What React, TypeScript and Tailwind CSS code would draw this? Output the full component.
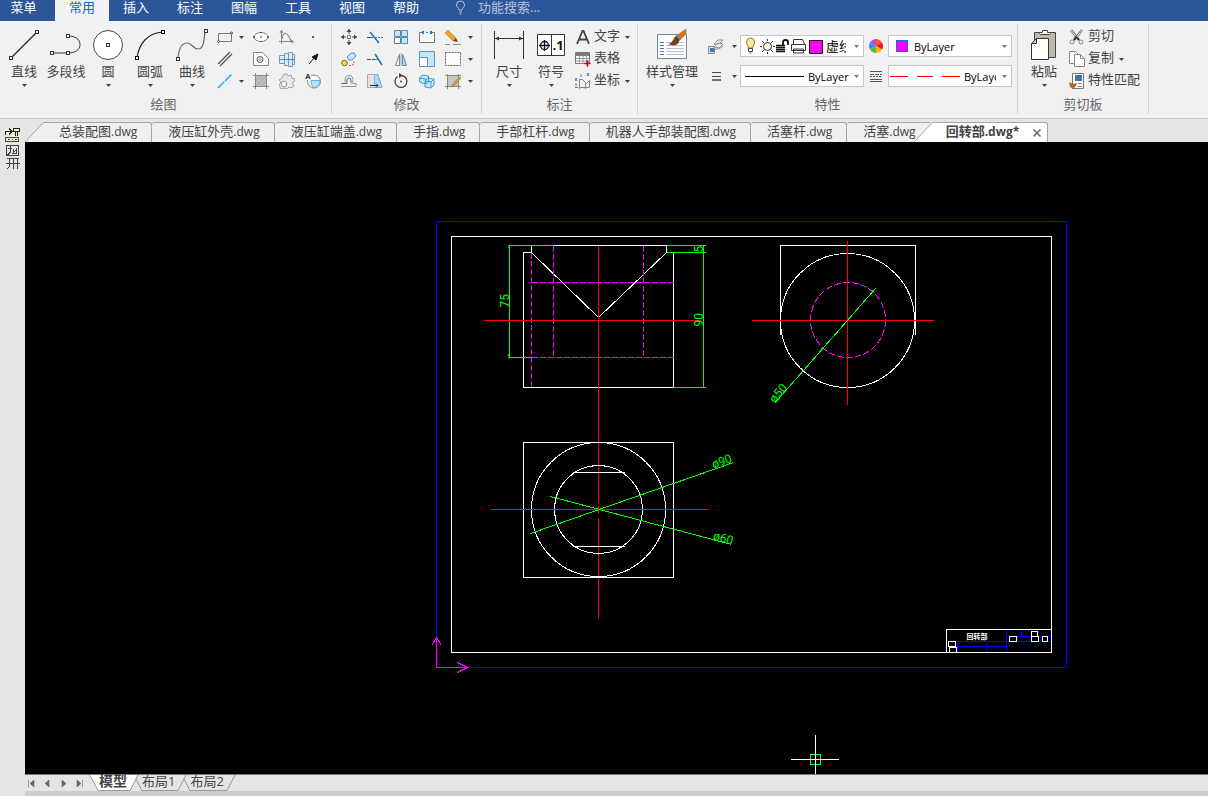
import React from 'react';

type IconProps = { children: React.ReactNode; size?: number };

const Icon = ({ children, size = 16 }: IconProps) => (
  <svg width={size} height={size} viewBox={`0 0 ${size} ${size}`} fill="none" stroke="#5a5f66" className="shrink-0">
    {children}
  </svg>
);

const Caret = ({ color = '#444' }: { color?: string }) => (
  <svg width="5" height="3" viewBox="0 0 5 3" className="shrink-0">
    <path d="M0 0h5L2.5 3z" fill={color} />
  </svg>
);

/* ---------- large ribbon icons ---------- */

const Node = ({ x, y, color = '#333' }: { x: number; y: number; color?: string }) => (
  <rect x={x - 1.5} y={y - 1.5} width="3" height="3" fill="#fff" stroke={color} />
);

const lineIcon = (
  <Icon size={32}>
    <path d="M3 29 29 3" stroke="#333" strokeWidth="1.5" />
    <Node x={3} y={29} />
    <Node x={29} y={3} />
  </Icon>
);

const polylineIcon = (
  <Icon size={32}>
    <path d="M2 24h16c7 0 12-3 12-8.5S25 7 18 7" stroke="#333" />
    <Node x={2} y={24} />
    <Node x={18} y={24} />
    <Node x={18} y={7} />
  </Icon>
);

const circleIcon = (
  <Icon size={32}>
    <circle cx="16" cy="16" r="14.5" fill="#fff" stroke="#444" />
    <Node x={16} y={16} />
  </Icon>
);

const arcIcon = (
  <Icon size={32}>
    <path d="M3 29C5 14 14 4 29 3" stroke="#222" strokeWidth="1.2" />
    <Node x={3} y={29} color="#000" />
    <Node x={29} y={3} color="#000" />
  </Icon>
);

const curveIcon = (
  <Icon size={32}>
    <path d="M2 29C3 18 7 14 11 14c5 0 6 6 11 6 6 0 6-9 7-18" stroke="#666" strokeWidth="1.2" />
    <Node x={2} y={30} />
    <Node x={30} y={2} />
  </Icon>
);

const dimIcon = (
  <Icon size={32}>
    <path d="M1.5 2v28M30.5 2v28" stroke="#333" />
    <path d="M2 9.5h28" stroke="#333" />
    <path d="m2 9.5 4-2v4zM30 9.5l-4-2v4z" fill="#333" stroke="none" />
  </Icon>
);

const symbolIcon = (
  <Icon size={32}>
    <path d="M2.500 5.500h27v21h-27z" fill="#fff" stroke="#333" />
    <path d="M16.5 6v20" stroke="#333" />
    <circle cx="9.5" cy="16.5" r="4" stroke="#111" strokeWidth="1.3" />
    <path d="M4 16.5h11M9.5 11v11" stroke="#111" strokeWidth="1.3" />
    <text x="17.5" y="21" fontSize="13" fontWeight="700" fontFamily="Open Sans, sans-serif" fill="#111" stroke="none">.1</text>
  </Icon>
);

const styleIcon = (
  <Icon size={32}>
    <path d="M1.5 5.500h29v24h-29z" fill="#fff" stroke="#6d8aa5" />
    <path d="M4 13.500h4M4 16.500h4M4 19.500h4M4 22.500h4M4 25.500h4" stroke="#5577a0" />
    <path d="M10 13.500h18M10 16.500h18M10 19.500h18M10 22.500h18M10 25.500h18" stroke="#b9bdd6" />
    <path d="M12 15c4 0 4-4 7-6l4 4c-2 4-6 4-11 2z" fill="#7a3e12" stroke="none" />
    <path d="m18 9 3-3 4 4-3 3z" fill="#444" stroke="none" />
    <path d="m20 7 10-7v5l-6 6z" fill="#c9752b" stroke="#a85d1c" strokeWidth=".5" />
  </Icon>
);

const pasteIcon = (
  <Icon size={32}>
    <path d="M6.500 3.500h21v25h-21z" fill="#c2b8aa" stroke="#444" />
    <path d="M11.500 4.500v-1h3v-2h5v2h3v1l-1 1h-9z" fill="#fff" stroke="#444" />
    <path d="M8.500 9.500h12v21h-17v-16z" fill="#fff" stroke="#333" />
    <path d="M8.500 9.500v5h-5z" fill="#ccc" stroke="#333" />
  </Icon>
);

/* ---------- small ribbon icons ---------- */

const drawIcons = [
  <Icon>
    <path d="M1.5 4.500h13v8h-13z" stroke="#777" />
    <circle cx="1.5" cy="12.5" r="1" fill="#fff" stroke="#444" />
    <circle cx="14.5" cy="4" r="1" fill="#fff" stroke="#444" />
  </Icon>,
  <Icon>
    <ellipse cx="8" cy="8" rx="7" ry="4.5" fill="#fcfcfc" stroke="#888" />
    <path d="M7 8h2M7 3.500h2M7 12.500h2M1 7v2M15 7v2" stroke="#444" strokeWidth="1.2" />
  </Icon>,
  <Icon>
    <path d="M2.500 1v14M0 12.500h14M1 4l1.500-3L4 4M12 11l2.500 1.500L12 14" stroke="#888" />
    <path d="M3 10c1-8 5-8 9 2" stroke="#666" />
  </Icon>,
  <Icon>
    <path d="M7 7h2v2H7z" fill="#555" stroke="none" />
  </Icon>,
  <Icon>
    <path d="M1 13 13 1M3 15 15 3" stroke="#555" strokeWidth="1.3" />
  </Icon>,
  <Icon>
    <path d="M.500 1.500h9l6 6v7H.500z" stroke="#888" fill="#fafafa" />
    <circle cx="7" cy="8.500" r="3" stroke="#555" />
    <circle cx="7" cy="8.500" r="1" stroke="#999" />
  </Icon>,
  <Icon>
    <path d="M.500 4.500h5v8h-5zM5.500 2.500h4v12h-4zM9.500 1.500h4v14h-4zM13.500 3.500h2v10h-2z" fill="#dce8f3" stroke="#8096ab" />
    <path d="M0 8.500h16" stroke="#2f9bd8" />
  </Icon>,
  <Icon>
    <path d="m4 13 5-6" stroke="#111" />
    <path d="m13 3-2 6-4-3z" fill="#111" stroke="#111" />
  </Icon>,
  <Icon>
    <path d="M1 15 15 1" stroke="#19a0e0" strokeWidth="1.3" strokeDasharray="9 1" />
  </Icon>,
  <Icon>
    <path d="M2.500 2.500h11v11h-11z" fill="#b9bec2" stroke="#777" />
    <path d="M0 2.500h16M0 13.500h16M2.500 0v16M13.500 0v16" stroke="#888" />
    <path d="m3 8 5-5M3 13 13 3M8 13l5-5" stroke="#a5a9ad" />
  </Icon>,
  <Icon>
    <path d="M5 1h3l1 2 3-1 1 3 3 1-1 3-2 1 2 3-3 2-2-1-2 2-3-1-3 1-2-4 2-3-2-2 3-2z" fill="#e3e9ef" stroke="#98a4ae" />
    <circle cx="5" cy="11" r="2.8" fill="#f6f6f6" stroke="#8d9aa5" />
  </Icon>,
  <Icon>
    <circle cx="9" cy="8.500" r="6.500" fill="#f7f7f7" stroke="#888" />
    <path d="M6 7.500h9c0 4-2 7-6 7-2-1-3-4-3-7z" fill="#b9e2f8" stroke="#38a5de" strokeWidth=".8" />
    <path d="M0 0h6v7H0z" fill="#f1f1f1" stroke="none" />
    <text x="0" y="6" fontSize="8" fontWeight="700" fontFamily="Liberation Sans, sans-serif" fill="#333" stroke="none">A</text>
  </Icon>,
];

const editIcons = [
  <Icon>
    <path d="M8 0v5M8 11v5M0 8h5M11 8h5" stroke="#444" />
    <path d="m8 0-2.500 3h5zM8 16l-2.500-3h5zM0 8l3-2.500v5zM16 8l-3-2.500v5z" fill="#444" stroke="none" />
    <path d="M6.500 6.500h3v3h-3z" fill="#fff" stroke="#777" />
  </Icon>,
  <Icon>
    <path d="M0 8.500h6" stroke="#555" />
    <path d="M8 8.500h8" stroke="#3f8fd0" strokeDasharray="2 1" />
    <path d="m3 3 9 11" stroke="#1d6fb8" strokeWidth="1.4" />
  </Icon>,
  <Icon>
    <path d="M1.500 1.500h6v6h-6zM8.500 1.500h6v6h-6zM8.500 8.500h6v6h-6z" fill="#c3e7fa" stroke="#4f8fba" />
    <path d="M1.500 8.500h6v6h-6z" fill="#fff" stroke="#777" />
  </Icon>,
  <Icon>
    <path d="M3 3.500H.500v10h15v-10H13M7 3.500h2" fill="#fafafa" stroke="#777" />
    <path d="M3 2h2v3H3zM11 2h2v3h-2z" fill="#2480c7" stroke="none" />
  </Icon>,
  <Icon>
    <path d="m0 4 3-3 8 8-3 3z" fill="#f2a02c" stroke="#c77a13" strokeWidth=".6" />
    <path d="m8 12 3-3 2 4z" fill="#7a3f1c" stroke="none" />
    <path d="M0 15.500h5M8 15.500h8" stroke="#888" />
  </Icon>,
  <Icon>
    <circle cx="3.5" cy="12" r="2.800" fill="#ffe100" stroke="#666" />
    <path d="m6 6 4-4 3 0 2 3-4 4H8z" fill="#c3e7fa" stroke="#4f8fba" />
    <path d="M8 14.500c4 0 5-1 5-4" stroke="#d36" strokeDasharray="2 1" />
  </Icon>,
  <Icon>
    <path d="M0 8.500h8" stroke="#555" strokeDasharray="4 1" />
    <path d="M8 8.500h4" stroke="#3f8fd0" />
    <path d="m8 3 7 11" stroke="#1d6fb8" strokeWidth="1.4" />
  </Icon>,
  <Icon>
    <path d="M6.500 3v11.500H2.500z" fill="#eee" stroke="#888" />
    <path d="M9.500 3v11.500h4z" fill="#a9dcf8" stroke="#6d8aa5" />
    <path d="M8 2v13" stroke="#aaa" />
  </Icon>,
  <Icon>
    <path d="M.500.500h15v15H.500z" fill="#c3e7fa" stroke="#6096be" />
    <path d="M.500 6.500h8v9h-8z" fill="#fff" stroke="#6096be" />
  </Icon>,
  <Icon>
    <path d="M.500 1.500h15v13H.500z" fill="#fcfcfc" stroke="#666" strokeDasharray="2 1" />
  </Icon>,
  <Icon>
    <path d="M0 13.500h15v-3h-3c-1 0 0-2 0-4s-1-4-4-4-4 2-4 4 1 4 0 4H0" stroke="#6d9ac0" />
    <path d="M1 10.500h5V7a2 2 0 0 1 4 0v3.500" stroke="#666" />
  </Icon>,
  <Icon>
    <path d="M.500 1.500h7v13h-7z" fill="#e2e2e2" stroke="#aaa" />
    <path d="M8 1.500h3l4 13H8" fill="#a9dcf8" stroke="#74afd0" />
    <path d="M3 12.500h8m-2-2 2 2-2 2" stroke="#333" />
  </Icon>,
  <Icon>
    <path d="M9 2.500a6 6 0 1 1-4.500 1" stroke="#444" strokeWidth="1.3" />
    <path d="m6 0 4 2.500L6 5z" fill="#444" stroke="none" />
    <circle cx="8" cy="8.500" r="1" fill="#444" stroke="none" />
  </Icon>,
  <Icon>
    <path d="m.500 5 3-3 6 1v6l-3 2-6-2zM6 8l3-3 6 1v6l-3 3-6-1z" fill="#c3e7fa" stroke="#4a9aca" />
    <path d="m.500 5 6 1v5M6 8l6 1v5M12 9l3-3" stroke="#4a9aca" />
  </Icon>,
  <Icon>
    <path d="M2.500 2.500h11v11h-11z" fill="#c3c7ca" stroke="#777" />
    <path d="M0 2.500h16M0 13.500h16M2.500 1v15M13.500 1v15" stroke="#888" />
    <path d="m8 11 6-7 2 1-6 7-3 1z" fill="#e79a35" stroke="#9b5b18" strokeWidth=".5" />
  </Icon>,
];

const letterIcon = (
  <Icon>
    <path d="M2 15 7.500 2h1L14 15M4.500 10.500h7" stroke="#444" strokeWidth="1.8" />
  </Icon>
);

const tableIcon = (
  <Icon>
    <path d="M.500 1.500h14v11H.500z" fill="#fff" stroke="#777" />
    <path d="M1 2h13v3H1z" fill="#777" stroke="none" />
    <path d="M1 7.500h13M1 10h13M4.500 4v9M8 4v9M11.500 4v9" stroke="#999" />
    <path d="M12.500 9.500v6M9.500 12.500h6" stroke="#c00" strokeWidth="1.6" />
  </Icon>
);

const coordIcon = (
  <Icon>
    <path d="M4.500 6v10M4.500 6.500h3l4 4 3-3v7h-10M10.500 10v6" stroke="#888" />
    <path d="m0 5 2 3M2 5 0 8M12 0l2 3M14 0l-2 3M1 10v3M6 1v3M0 14.500h3" stroke="#4180c0" />
  </Icon>
);

const scissorsIcon = (
  <Icon>
    <path d="m2 1 8 10M13 1 5 11" stroke="#666" strokeWidth="2.4" />
    <path d="m2 1 7 9M13 1 6 10" stroke="#eee" />
    <path d="m5 11 2-3 3 3" stroke="#333" strokeWidth="1.5" />
    <circle cx="3" cy="13" r="2" stroke="#888" />
    <circle cx="12" cy="13" r="2" stroke="#888" />
  </Icon>
);

const copyIcon = (
  <Icon>
    <path d="M.500.500h6l3 3v9h-9z" fill="#fff" stroke="#888" />
    <path d="M5.500 3.500h6l4 4v8h-10z" fill="#fff" stroke="#888" />
    <path d="M11.500 3.500v4h4" stroke="#888" />
  </Icon>
);

const matchIcon = (
  <Icon>
    <path d="M3.500.500h11v15h-11z" fill="#fff" stroke="#777" />
    <path d="M6 2h7v6H6z" fill="#3d78b5" stroke="none" />
    <path d="M9 10.500h4M9 13.500h4" stroke="#888" />
    <path d="m0 9 4 2 4-1-1 3-3 3-3-2z" fill="#b5651d" stroke="none" />
  </Icon>
);

/* ---------- ribbon building blocks ---------- */

type BigButtonProps = { icon: React.ReactNode; label: string; caret?: boolean; wide?: boolean };

const BigButton = ({ icon, label, caret = true, wide }: BigButtonProps) => (
  <button className={`flex h-[68px] flex-col items-center pt-[3px] ${wide ? 'w-[60px]' : 'w-[42px]'}`}>
    {icon}
    <span className="mt-px whitespace-nowrap leading-[18px]">{label}</span>
    {caret && <span className="mt-1"><Caret /></span>}
  </button>
);

const RowButton = ({ icon, label, caret }: { icon: React.ReactNode; label: string; caret?: boolean }) => (
  <button className="flex h-[22px] items-center gap-[3px] whitespace-nowrap">
    {icon}
    <span className="pb-[3px]">{label}</span>
    {caret && <span className="ml-0.5"><Caret /></span>}
  </button>
);

type GroupProps = { title: string; className: string; indent: string; children: React.ReactNode };

const Group = ({ title, className, indent, children }: GroupProps) => (
  <section aria-label={title} className={`flex shrink-0 flex-col border-r border-[#d4d4d4] ${className}`}>
    <div className={`flex h-[72px] pt-0.5 ${indent}`}>{children}</div>
    <div className="text-center leading-5 text-[#666]">{title}</div>
  </section>
);

const comboClass = 'flex h-[22px] w-[124px] items-center border border-[#c6c6c6] bg-white pr-1 pl-1 text-black';
const selectClass = 'h-full min-w-0 flex-1 appearance-none overflow-hidden bg-transparent outline-none';

const menus = ['插入', '标注', '图幅', '工具', '视图', '帮助'];

const MenuBar = () => (
  <nav className="flex h-[21px] bg-[#2b579a] text-white">
    <button className="w-[55px] pr-2 pb-1.5">菜单</button>
    <button className="w-[54px] bg-[#f1f1f1] pb-1.5 text-[#1a66c2]">常用</button>
    {menus.map((m) => (
      <button key={m} className="w-[54px] pb-1.5">{m}</button>
    ))}
    <label className="ml-5 flex items-center gap-2.5 pb-1.5">
      <svg width="15" height="15" viewBox="0 0 15 15" fill="none" stroke="#b4c3dd">
        <path d="M6 10c0-2-2.500-2.500-2.500-5a4 4 0 0 1 8 0c0 2.500-2.500 3-2.500 5zM6 12h3M6.500 14h2" />
      </svg>
      <input
        aria-label="功能搜索"
        placeholder="功能搜索..."
        className="w-32 bg-transparent outline-none placeholder:text-[#b4c3dd]"
      />
    </label>
  </nav>
);

const Ribbon = () => (
  <div className="flex h-[98px] overflow-hidden border-b border-[#c9c9c9] bg-[#f1f1f1] pt-[3px] pb-1">
    <Group title="绘图" className="w-[332px] pr-1" indent="pl-[3px]">
      <div className="flex">
        <BigButton icon={lineIcon} label="直线" />
        <BigButton icon={polylineIcon} label="多段线" caret={false} />
        <BigButton icon={circleIcon} label="圆" />
        <BigButton icon={arcIcon} label="圆弧" />
        <BigButton icon={curveIcon} label="曲线" />
      </div>
      <div className="grid grid-cols-[35px_26px_26px_26px] grid-rows-[22px_22px_22px]">
        {drawIcons.map((icon, i) => (
          <button key={i} aria-label="绘图工具" className={`flex items-center gap-1.5 ${i % 4 === 0 ? 'pl-1' : 'justify-center'}`}>
            {icon}
            {(i === 0 || i === 8) && <Caret />}
          </button>
        ))}
      </div>
    </Group>

    <Group title="修改" className="w-[150px]" indent="pl-1">
      <div className="grid grid-cols-[26px_26px_26px_26px_36px] grid-rows-[22px_22px_22px]">
        {editIcons.map((icon, i) => (
          <button key={i} aria-label="修改工具" className={`flex items-center ${i % 5 === 4 ? 'gap-[7px] pl-[5px]' : 'justify-center'}`}>
            {icon}
            {i % 5 === 4 && <Caret />}
          </button>
        ))}
      </div>
    </Group>

    <Group title="标注" className="w-[156px]" indent="pl-1.5">
      <BigButton icon={dimIcon} label="尺寸" />
      <BigButton icon={symbolIcon} label="符号" />
      <div className="ml-[3px]">
        <RowButton icon={letterIcon} label="文字" caret />
        <RowButton icon={tableIcon} label="表格" />
        <RowButton icon={coordIcon} label="坐标" caret />
      </div>
    </Group>

    <Group title="特性" className="w-[380px]" indent="pl-1">
      <BigButton icon={styleIcon} label="样式管理" wide />
      <div className="ml-1.5 flex flex-col gap-2 pt-[9px] text-[11px]">
        <div className="flex h-[22px] items-center">
          <button aria-label="图层" className="flex w-8 items-center gap-2">
            <Icon>
              <path d="m6 6 4-4h5l-4 4zM6 9l4-4 5 1-4 4zM7 11h4l4-3" fill="#f4f4f4" stroke="#8a939c" />
              <path d="M.500 8.500h6v7h-6z" fill="#ddd" stroke="#888" />
              <path d="M2 10h4v4H2z" fill="#3a78b8" stroke="none" />
            </Icon>
            <Caret />
          </button>
          <div className={comboClass}>
            <svg width="80" height="18" viewBox="0 0 80 18" fill="none" stroke="#333" className="shrink-0">
              <path d="M3.500 11C3 8 1.500 8 1.500 5a4 4 0 0 1 8 0c0 3-1.500 3-2 6z" fill="#ffe7a0" stroke="#9a7a30" />
              <path d="M3.500 11.500h4v3h-4zM4.500 16h2" stroke="#444" />
              <circle cx="22.5" cy="9.500" r="4" fill="#fff6da" />
              <path d="M22.500 2v2M22.500 15v2M15 9.500h2M28 9.500h2M17 4l2 2M28 4l-2 2M17 15l2-2M28 15l-2-2" />
              <path d="M31 8.500h9M31 10.500h9M31 12.500h9M31 14.500h9" stroke="#111" strokeWidth="1.4" />
              <path d="M38 8V5q0-2 2.500-2T43 5v3" stroke="#111" strokeWidth="1.8" />
              <path d="M48.500 7V2.500h9L59.500 7M46.500 7.500h14v6h-14zM48.500 12v4h10v-4z" fill="#fff" />
              <path d="M64.500 3.500h13v13h-13z" fill="#f0f" stroke="#111" />
            </svg>
            <select aria-label="当前图层" className={`ml-px text-[13px] ${selectClass}`}>
              <option>虚线层</option>
            </select>
            <span className="ml-2 shrink-0"><Caret color="#777" /></span>
          </div>
          <div className="flex w-6 justify-center">
            <svg width="14" height="14" viewBox="0 0 14 14">
              <path d="M7 7V0a7 7 0 0 1 6 3.500z" fill="#ff5a22" />
              <path d="M7 7V0a7 7 0 0 0-6 3.500z" fill="#b44bd8" />
              <path d="M7 7l6-3.500a7 7 0 0 1 0 7z" fill="#e31b23" />
              <path d="M7 7 1 3.500a7 7 0 0 0 0 7z" fill="#3c8ee8" />
              <path d="m7 7 6 3.500A7 7 0 0 1 7 14z" fill="#ffb300" />
              <path d="m7 7-6 3.500A7 7 0 0 0 7 14z" fill="#56b947" />
            </svg>
          </div>
          <div className={comboClass}>
            <span className="ml-[3px] size-3 shrink-0 border border-[#0078d7] bg-[#f0f]" />
            <select aria-label="颜色" className={`ml-1.5 ${selectClass}`}>
              <option>ByLayer</option>
            </select>
            <Caret color="#777" />
          </div>
        </div>
        <div className="flex h-[22px] items-center">
          <button aria-label="线宽设置" className="flex w-8 items-center gap-2">
            <Icon>
              <path d="M4 4.500h9M4 8.500h9" stroke="#444" />
              <path d="M4 12h9" stroke="#444" strokeWidth="1.500" />
            </Icon>
            <Caret />
          </button>
          <div className={comboClass}>
            <span className="h-px w-[59px] shrink-0 bg-black" />
            <select aria-label="线宽" className={`ml-1 ${selectClass}`}>
              <option>ByLayer</option>
            </select>
            <Caret color="#777" />
          </div>
          <div className="flex w-6 justify-center">
            <svg width="12" height="11" viewBox="0 0 12 11" stroke="#555" fill="none">
              <path d="M0 .500h12M0 8.500h12M0 10.500h12" />
              <path d="M0 3.500h12" strokeDasharray="4 1" />
              <path d="M0 5.500h12" strokeDasharray="2 1" />
            </svg>
          </div>
          <div className="flex h-[22px] w-[124px] items-center border border-[#c6c6c6] bg-white pr-1 pl-px text-black">
            <svg width="70" height="1" viewBox="0 0 70 1" className="shrink-0" shapeRendering="crispEdges">
              <path d="M0 .500h18M27 .500h16M52 .500h18" stroke="red" />
            </svg>
            <select aria-label="线型" className={`ml-1 ${selectClass}`}>
              <option>ByLayer</option>
            </select>
            <span className="ml-1.5 shrink-0"><Caret color="#777" /></span>
          </div>
        </div>
      </div>
    </Group>

    <Group title="剪切板" className="w-[131px]" indent="pl-[5px]">
      <BigButton icon={pasteIcon} label="粘贴" />
      <div className="ml-1">
        <RowButton icon={scissorsIcon} label="剪切" />
        <RowButton icon={copyIcon} label="复制" caret />
        <RowButton icon={matchIcon} label="特性匹配" />
      </div>
    </Group>
  </div>
);

/* ---------- document tabs ---------- */

const docs = ['总装配图', '液压缸外壳', '液压缸端盖', '手指', '手部杠杆', '机器人手部装配图', '活塞杆', '活塞'];

const Slope = ({ fill, overlap }: { fill: string; overlap?: boolean }) => (
  <svg width="20" height="20" viewBox="0 0 20 20" className={`shrink-0 ${overlap ? 'relative -ml-4' : ''}`}>
    <path d="M0 20 18.500.500H20V20z" fill={fill} />
    <path d="M0 20 18.500.500H20" fill="none" stroke="#a5a5a5" />
  </svg>
);

const DocTabs = () => (
  <div className="flex h-[23px] overflow-hidden bg-[#e5e5e5] pt-[3px] whitespace-nowrap text-[#444]">
    <Slope fill="#f0f0f0" />
    {docs.map((name, i) => (
      <button
        key={name}
        className={`h-5 shrink-0 border-t border-[#a5a5a5] bg-[#f0f0f0] pr-3.5 pb-0.5 leading-4 ${i === 0 ? 'pl-3.5' : 'rounded-tl-[3px] pl-4'} ${i < 7 ? 'rounded-tr-[3px] border-r' : ''}`}
      >
        {name}<span className="text-xs">.dwg</span>
      </button>
    ))}
    <Slope fill="#fff" overlap />
    <div className="flex h-5 shrink-0 items-center rounded-tr-[3px] border-t border-r border-[#a5a5a5] bg-white pr-1.5 pl-3">
      <button className="pb-0.5 leading-4 font-bold">
        回转部<span className="text-xs">.dwg*</span>
      </button>
      <button aria-label="关闭" className="ml-3.5">
        <svg width="8" height="8" viewBox="0 0 8 8" stroke="#666" strokeWidth="1.5">
          <path d="m.500.500 7 7M7.500.500l-7 7" />
        </svg>
      </button>
    </div>
  </div>
);

/* ---------- drawing area ---------- */

const Drawing = () => (
  <svg aria-label="图纸" className="block min-h-[600px] w-full flex-1 bg-black" shapeRendering="crispEdges" fill="none">
    <g transform="translate(-24.5 -141.5)">
      {/* sheet frame */}
      <path d="M436 221h630v446H436z" stroke="#00f" />
      <path d="M451 236h600v416H451z" stroke="#fff" />

      {/* front view */}
      <g stroke="#fff">
        <path d="M531 245h135v7M531 245v7h-8v135h150V252M531 252l67 65 68-65" />
      </g>
      <g stroke="#f0f" strokeDasharray="6 2">
        <path d="M531 252v135M553 245v112M643 245v112M531 282h142M531 357h142" />
      </g>
      <g stroke="#0f0">
        <path d="M507 245h46M507 357h24M509 245v112M508 248l1-3M508 354l1 3" />
        <path d="M666 245h39M666 252h39M703 245v142M673 387h32" />
      </g>
      <path d="M483 320h217M598 245v257M598 505v8M598 517v101" stroke="red" />

      {/* side view */}
      <path d="M780 334v-89h135v89" stroke="#fff" />
      <circle cx="847" cy="320" r="67" stroke="#fff" />
      <circle cx="847.5" cy="319.5" r="37.5" stroke="#f0f" strokeDasharray="7 2" />
      <path d="M751 320h182M847 240v164" stroke="red" />
      <path d="m774 403 101-115M871 290l3 1M820 348h3" stroke="#0f0" />

      {/* top view */}
      <path d="M523 442h150v135H523z" stroke="#fff" />
      <circle cx="598" cy="509" r="67" stroke="#fff" />
      <circle cx="598" cy="509" r="44" stroke="#fff" />
      <path d="M572 472h52M572 546h52" stroke="#fff" />
      <path d="M490 509h217" stroke="red" />
      <path d="m530 533 203-71M550 496l181 48" stroke="#0f0" />

      {/* dimension values */}
      <g fill="#0f0" fontFamily="'Liberation Sans Narrow', Roboto, sans-serif" fontSize="12">
        <text transform="translate(508 307) rotate(-90)">75</text>
        <text transform="translate(702 326) rotate(-90)">90</text>
        <text transform="translate(702 252) rotate(-90)">5</text>
        <text transform="translate(774 403) rotate(-49)">ø50</text>
        <text transform="translate(713 468) rotate(-19)">ø90</text>
        <text transform="translate(712 539) rotate(15)">ø60</text>
      </g>

      {/* title block */}
      <path d="M946 641h60M946 646h60M957 641v11M987 641v11M1006 629v23M1006 636h46M1021 629v7M1017 636v5h12v-5M1040 636v5M1006 641h46" stroke="#00f" />
      <path d="M946 629h105v23H946z" stroke="#fff" />
      <path d="M1009 636h7v5h-7zM1031 631h6v5h-6zM1031 636h7v5h-7zM1042 636h5v5h-5zM948 641h7v5h-7zM949 647h7v5h-7z" fill="#000" stroke="#fff" />
      <text x="966" y="638" fontSize="7" fontWeight="700" fill="#fff">回转部</text>

      {/* UCS origin */}
      <path d="M436 637v30h30M431 645l5-8 5 8M457 662l10 5-10 5" stroke="#f0f" />

      {/* crosshair */}
      <path d="M810 754h10v10h-10z" stroke="#00ff80" />
      <path d="M815 734v41M790 759h48" stroke="#fff" />
    </g>
  </svg>
);

/* ---------- layout tabs ---------- */

const LayoutTabs = () => (
  <div className="border-t border-[#777] bg-[#e5e5e5] text-[#444]">
    <div className="flex h-4">
      <div className="flex items-center">
        {['M1.5 1v7M7 1v7L3 4.500z', 'M6 1v7L2 4.500z', 'M3 1v7l4-3.500z', 'M7.500 1v7M2 1v7l4-3.500z'].map((d) => (
          <button key={d} aria-label="切换布局" className="flex w-4 justify-center pr-1">
            <svg width="9" height="9" viewBox="0 0 9 9" fill="#666" stroke="#666" strokeWidth=".6">
              <path d={d} />
            </svg>
          </button>
        ))}
      </div>
      <svg width="10" height="16" viewBox="0 0 10 16" className="shrink-0">
        <path d="M0 0h10v16H9z" fill="#fff" />
        <path d="m.500 0 9 16" stroke="#999" />
      </svg>
      <button className="border-b border-[#999] bg-white pb-1 text-sm leading-3 font-bold">模型</button>
      {['布局1', '布局2'].map((name, i) => (
        <React.Fragment key={name}>
          <svg width="15" height="16" viewBox="0 0 15 16" className="shrink-0">
            {i === 0 && <path d="M0 0h11L3 16H0z" fill="#fff" />}
            <path d="M3 15.500 11 0M9 4l6 12M0 15.500h3" stroke="#999" fill="none" />
          </svg>
          <button className="border-b border-[#999] pb-1 leading-3">{name}</button>
        </React.Fragment>
      ))}
      <svg width="12" height="16" viewBox="0 0 12 16" className="shrink-0">
        <path d="M0 15.500h3L11 0" stroke="#999" fill="none" />
      </svg>
    </div>
    <div className="h-[5px] bg-[#cdcdcd]" />
  </div>
);

const SideRail = () => (
  <aside className="flex w-[25px] shrink-0 flex-col items-center bg-[#e5e5e5] pt-2">
    <button aria-label="工具面板">
      <svg width="15" height="43" viewBox="0 0 15 43" fill="none" stroke="#444" shapeRendering="crispEdges">
        <path d="M0 0h15v17H0z" fill="#ebebd8" stroke="none" />
        <path d="M.500 8V4.500h5M4 1.500l3 3-3 3M8.500 1.500h6v3h-6zM10.500 4v5M12.500 4v5" stroke="#222" />
        <path d="M.500 10.500h13v4H.500zM3 12.500h2M7 12.500h1M10 12.500h2" />
        <path d="M1.500 18.500h12v10h-12zM3 21.500h4M5.500 19v6l-3 3M8.500 22v4h3v-5M7 27l4-4" />
        <path d="M2 31.500h12M4.500 31v8l-2 3M8.500 31v11M12.500 31v11M1 36.500h14" />
      </svg>
    </button>
  </aside>
);

export default function App() {
  return (
    <div className="flex min-h-screen flex-col bg-[#e5e5e5] font-['Open_Sans','Noto_Sans_CJK_SC',sans-serif] text-[13px] leading-[15px] text-[#444]">
      <MenuBar />
      <Ribbon />
      <div className="flex flex-1">
        <SideRail />
        <main className="flex min-w-0 flex-1 flex-col">
          <DocTabs />
          <Drawing />
          <LayoutTabs />
        </main>
      </div>
    </div>
  );
}
